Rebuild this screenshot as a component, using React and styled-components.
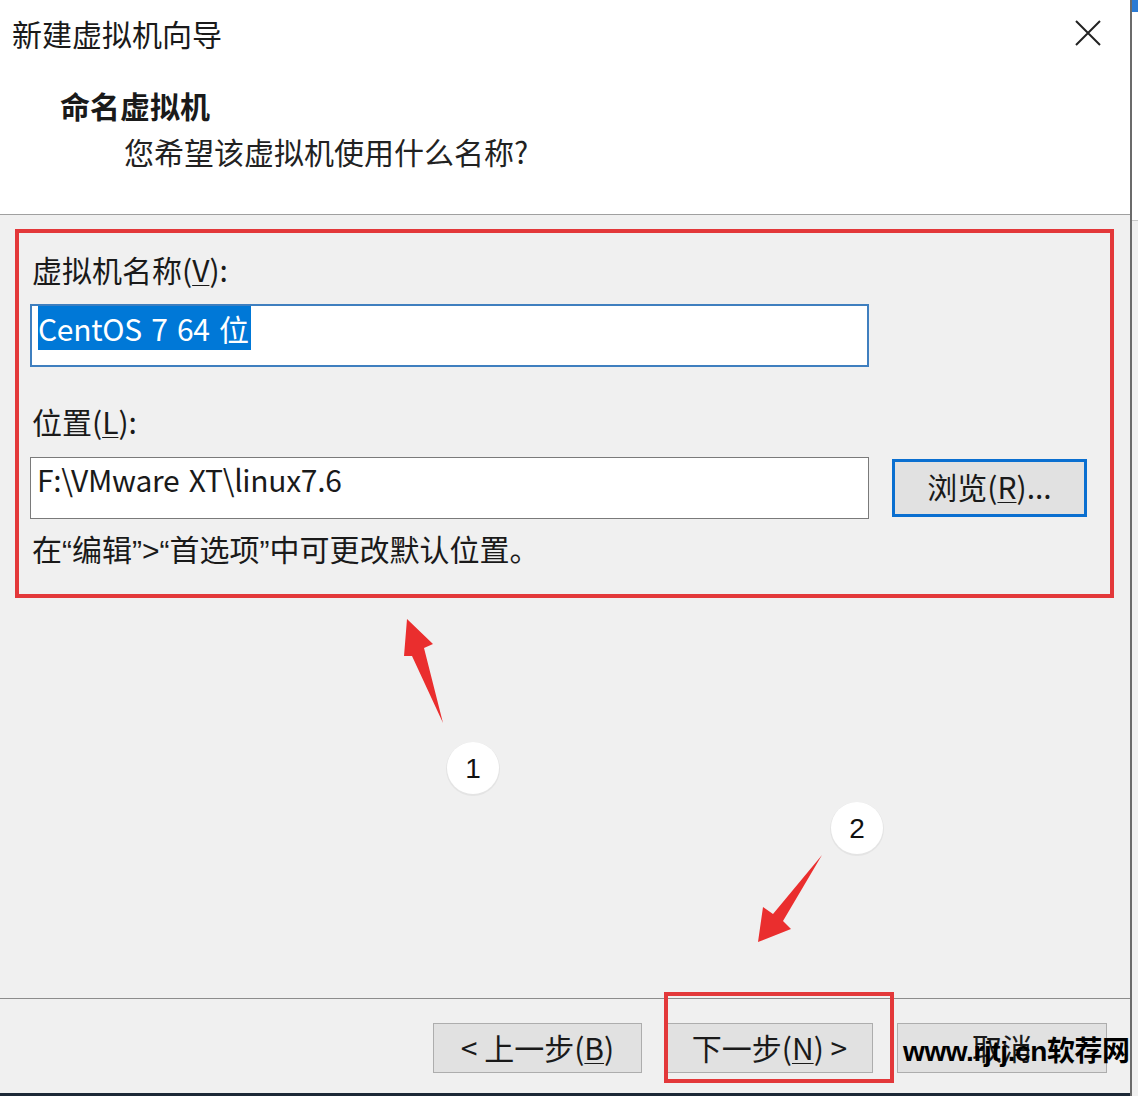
import React from "react";
import styled, { createGlobalStyle } from "styled-components";

const GlobalStyle = createGlobalStyle`
	html, body {
		margin: 0;
		padding: 0;
		background: #f0f0f0;
		overflow: hidden;
	}
	body {
		font-family: "Noto Sans CJK SC", "Noto Sans", sans-serif;
		color: #1a1a1a;
	}
`;

const Screen = styled.div`
	position: relative;
	display: flex;
	width: 1138px;
	height: 1096px;
	overflow: hidden;
`;

const Dialog = styled.div`
	display: flex;
	flex-direction: column;
	width: 1130px;
	height: 100%;
	background: #f0f0f0;
`;

const BehindWindow = styled.div`
	display: flex;
	flex-direction: column;
	width: 8px;
	border-left: 2px solid #6b6b6b;
	background: #f0f0f0;
`;

const BehindBand = styled.div`
	height: ${p => p.h}px;
	background: ${p => p.bg};
	border-bottom: ${p => (p.line ? "1px solid #c8c8c8" : "none")};
`;

const Header = styled.header`
	box-sizing: border-box;
	height: 215px;
	background: #fff;
	border-bottom: 1px solid #a0a0a0;
	padding: 15px 12px 0;
`;

const TitleRow = styled.div`
	display: flex;
	justify-content: space-between;
	align-items: center;
	height: 36px;
`;

const Title = styled.div`
	font-size: 30px;
	line-height: 36px;
`;

const CloseButton = styled.div`
	display: flex;
	width: 28px;
	height: 28px;
	margin-right: 16px;
`;

const Heading = styled.div`
	margin-top: 36px;
	padding-left: 48px;
	font-size: 30px;
	line-height: 36px;
	font-weight: 700;
`;

const Subtitle = styled.div`
	margin-top: 10px;
	padding-left: 112px;
	font-size: 30px;
	line-height: 36px;
	color: #222;
`;

const Body = styled.main`
	flex: 1;
	padding: 14px 16px 0 15px;
`;

const Highlight = styled.section`
	box-sizing: border-box;
	width: 1099px;
	height: 369px;
	border: 4px solid #e3383a;
	padding: 18px 0 0 11px;
`;

const Label = styled.div`
	padding-left: 2px;
	margin-top: ${p => p.mt || 0}px;
	font-size: 30px;
	line-height: 36px;
`;

const Key = styled.span`
	text-decoration: underline;
	text-underline-offset: 3px;
	text-decoration-thickness: 1px;
`;

const Narrow = styled.span`
	font-family: "Liberation Sans", sans-serif;
`;

const Field = styled.div`
	box-sizing: border-box;
	width: 839px;
	height: ${p => p.h}px;
	margin-top: ${p => p.mt || 0}px;
	background: #fff;
	border: ${p => (p.focused ? "2px solid #3f7fbf" : "1px solid #7a7a7a")};
	padding: ${p => (p.focused ? "5px 6px" : "4px 6px")};
	font-size: 30px;
	line-height: 34px;
	letter-spacing: -0.3px;
	word-spacing: 3px;
`;

const Selected = styled.span`
	background: #0078d7;
	color: #fff;
	padding-right: 2px;
`;

const FieldRow = styled.div`
	display: flex;
	align-items: center;
	margin-top: 18px;
`;

const BrowseButton = styled.div`
	box-sizing: border-box;
	display: flex;
	align-items: center;
	justify-content: center;
	width: 195px;
	height: 58px;
	margin-left: 23px;
	background: #e1e1e1;
	border: 3px solid #0a6fd0;
	font-size: 30px;
	padding-bottom: 4px;
`;

const Footer = styled.footer`
	position: relative;
	display: flex;
	justify-content: flex-end;
	align-items: flex-start;
	gap: 24px;
	height: 95px;
	box-sizing: border-box;
	border-top: 1px solid #8c8c8c;
	padding: 24px 23px 0 0;
`;

const Button = styled.div`
	box-sizing: border-box;
	display: flex;
	align-items: center;
	justify-content: center;
	width: ${p => p.w}px;
	height: 50px;
	background: #e1e1e1;
	border: 1px solid #adadad;
	font-size: 30px;
	padding-bottom: 3px;
`;

const Taskbar = styled.div`
	height: 3px;
	background: #1c2836;
`;

const Annotations = styled.svg`
	position: absolute;
	left: 0;
	top: 0;
	pointer-events: none;
`;

const Watermark = styled.div`
	position: absolute;
	left: 903px;
	top: 1029px;
	font-family: "Liberation Sans", "Noto Sans CJK SC", sans-serif;
	font-size: 28px;
	font-weight: 700;
	color: #000;
	letter-spacing: -0.4px;
	white-space: nowrap;
`;

const Badge = ({ cx, cy, n }) => (
	<g>
		<circle cx={cx} cy={cy + 1} r="27" fill="#e4e4e4" />
		<circle cx={cx} cy={cy} r="26" fill="#fff" />
		<text
			x={cx}
			y={cy + 10}
			textAnchor="middle"
			fontSize="28"
			fontFamily="Liberation Sans, sans-serif"
			fill="#111"
		>
			{n}
		</text>
	</g>
);

const App = () => {
	return (
		<>
			<GlobalStyle />
			<Screen>
				<Dialog>
					<Header>
						<TitleRow>
							<Title>新建虚拟机向导</Title>
							<CloseButton>
								<svg width="28" height="28" viewBox="0 0 28 28">
									<path d="M2 2 L26 26 M26 2 L2 26" stroke="#222" strokeWidth="2" />
								</svg>
							</CloseButton>
						</TitleRow>
						<Heading>命名虚拟机</Heading>
						<Subtitle>您希望该虚拟机使用什么名称?</Subtitle>
					</Header>
					<Body>
						<Highlight>
							<Label>
								虚拟机名称(<Key>V</Key>):
							</Label>
							<Field focused h={63} mt={17}>
								<Selected>CentOS 7 64 位</Selected>
							</Field>
							<Label mt={36}>
								位置(<Key>L</Key>):
							</Label>
							<FieldRow>
								<Field h={62}>F:\VMware XT\linux7.6</Field>
								<BrowseButton>
									浏览(<Key>R</Key>)...
								</BrowseButton>
							</FieldRow>
							<Label mt={11}>
								在<Narrow>“</Narrow>编辑<Narrow>”&gt;“</Narrow>首选项<Narrow>”</Narrow>中可更改默认位置。
							</Label>
						</Highlight>
					</Body>
					<Footer>
						<Button w={209}>
							&lt; 上一步(<Key>B</Key>)
						</Button>
						<Button w={207}>
							下一步(<Key>N</Key>) &gt;
						</Button>
						<Button w={210}>取消</Button>
					</Footer>
					<Taskbar />
				</Dialog>
				<BehindWindow>
					<BehindBand h={12} bg="#2b7bd4" />
					<BehindBand h={208} bg="#fff" line />
					<BehindBand h={876} bg="#f0f0f0" />
				</BehindWindow>
				<Annotations width="1138" height="1096" viewBox="0 0 1138 1096">
					<polygon
						points="407,619 433,644 424,648 443,723 412,656 404,656"
						fill="#ea2e2e"
					/>
					<polygon
						points="822,855 783,921 791,929 758,942 763,907 773,914"
						fill="#ea2e2e"
					/>
					<Badge cx={473} cy={768} n="1" />
					<Badge cx={857} cy={828} n="2" />
					<rect
						x="666"
						y="994"
						width="226"
						height="87"
						fill="none"
						stroke="#e3383a"
						strokeWidth="4"
					/>
				</Annotations>
				<Watermark>www.rjtj.cn软荐网</Watermark>
			</Screen>
		</>
	);
};

export default App;
